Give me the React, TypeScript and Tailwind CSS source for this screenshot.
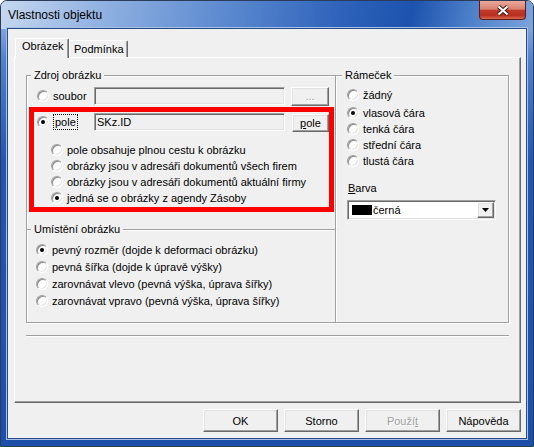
import React from "react";

// classic 3D edges
const raised =
  "border border-t-white border-l-white border-r-[#696969] border-b-[#696969] shadow-[inset_-1px_-1px_0_#a0a0a0,inset_1px_1px_0_#e3e3e3] bg-[#f0f0f0]";
const sunken =
  "border border-t-[#a0a0a0] border-l-[#a0a0a0] border-r-white border-b-white shadow-[inset_1px_1px_0_#696969,inset_-1px_-1px_0_#e3e3e3]";

function Radio({ checked = false }: { checked?: boolean }) {
  return (
    <span className="w-[12px] h-[12px] shrink-0 rounded-full bg-white border border-t-[#a0a0a0] border-l-[#a0a0a0] border-r-white border-b-white shadow-[inset_1px_1px_0_#8a8a8a,inset_-1px_-1px_0_#e3e3e3] flex items-center justify-center">
      {checked && <span className="w-[4px] h-[4px] rounded-full bg-black" />}
    </span>
  );
}

function Option({ label, checked, h = "h-[16px]" }: { label: string; checked?: boolean; h?: string }) {
  return (
    <div className={`flex items-center gap-[4px] ${h}`}>
      <Radio checked={checked} />
      <span className="whitespace-nowrap">{label}</span>
    </div>
  );
}

function Legend({ children, className = "" }: { children: React.ReactNode; className?: string }) {
  return (
    <span className={`absolute -top-[8px] bg-[#f0f0f0] px-[3px] leading-[14px] whitespace-nowrap ${className}`}>
      {children}
    </span>
  );
}

function DlgButton({ children, disabled }: { children: React.ReactNode; disabled?: boolean }) {
  return (
    <div
      className={`w-[75px] h-[23px] flex items-center justify-center ${raised} ${
        disabled ? "text-[#a0a0a0] [text-shadow:1px_1px_0_#fff]" : ""
      }`}
    >
      {children}
    </div>
  );
}

export default function App() {
  return (
    <div className="w-[534px] h-[447px] bg-white overflow-hidden font-['Liberation_Sans',Arial,sans-serif] text-[11px] leading-[14px] text-black">
      <div className="h-full flex flex-col rounded-t-[7px] border border-[#2c3b57] bg-[linear-gradient(180deg,#a8c2ea_0px,#4f80cc_60px,#2257b1_160px,#1b4fa9_100%)] overflow-hidden">
        {/* title bar */}
        <div className="h-[28px] shrink-0 flex items-start justify-between bg-[linear-gradient(100deg,#c6d8ef_0%,#93b3e2_18%,#5c8ad0_42%,#2e62ba_64%,#1d53ae_77%,#4d80ca_88%,#7ca4db_100%)]">
          <span className="mt-[6px] ml-[7px] text-[12px] leading-[16px]">Vlastnosti objektu</span>
          <div className="mr-[7px] w-[47px] h-[19px] rounded-b-[4px] border border-t-0 border-[#5a1d1d] bg-[linear-gradient(180deg,#eaa99c_0%,#d9826f_45%,#c0392b_52%,#b8301f_80%,#d86a4e_100%)] flex items-center justify-center">
            <svg width="14" height="11" viewBox="0 0 14 11">
              <path d="M2.5 1.5 L11.5 9.5 M11.5 1.5 L2.5 9.5" stroke="#3b1616" strokeWidth="4" />
              <path d="M2.5 1.5 L11.5 9.5 M11.5 1.5 L2.5 9.5" stroke="#fff" strokeWidth="2.2" />
            </svg>
          </div>
        </div>

        {/* client area */}
        <div className="flex-1 mx-[7px] mb-[8px] bg-[#f0f0f0] shadow-[0_0_0_1px_#274c8a,0_0_0_2px_#a6c0e6] pt-[9px] pl-[6px]">
          {/* tabs */}
          <div className="relative z-10 flex items-end h-[20px] -mb-[1px] ml-[1px]">
            <div className="w-[54px] h-[20px] pl-[6px] bg-[#f0f0f0] rounded-t-[2px] border-t border-l border-white border-r border-r-[#696969] shadow-[inset_-1px_0_0_#a0a0a0]">
              Obrázek
            </div>
            <div className="w-[59px] h-[17px] mb-[1px] pl-[4px] pt-[1px] bg-[#f0f0f0] rounded-t-[2px] border-t border-l border-white border-r border-r-[#696969] shadow-[inset_-1px_0_0_#a0a0a0]">
              Podmínka
            </div>
          </div>

          {/* tab panel */}
          <div className="w-[507px] h-[346px] border border-t-white border-l-white border-r-[#696969] border-b-[#696969] shadow-[inset_-1px_-1px_0_#a0a0a0] pl-[11px] pt-[17px]">
            <div className="flex">
              <div className="w-[310px]">
                {/* Zdroj obrázku */}
                <div className="relative h-[154px] border-t border-l border-r border-[#a0a0a0] shadow-[inset_1px_1px_0_#fff,1px_0_0_#fff] pl-[10px] pt-[11px]">
                  <Legend className="left-[4px]">Zdroj obrázku</Legend>
                  <div className="flex items-center h-[18px]">
                    <div className="w-[57px] flex items-center gap-[4px]">
                      <Radio />
                      <span>soubor</span>
                    </div>
                    <div className={`w-[191px] h-[18px] bg-[#f0f0f0] ${sunken}`} />
                    <div className={`ml-[6px] w-[38px] h-[19px] flex items-center justify-center text-[#a0a0a0] [text-shadow:1px_1px_0_#fff] ${raised}`}>
                      ...
                    </div>
                  </div>

                  <div className="mt-[2px] -ml-[8px] w-[305px] h-[105px] border-[5px] border-[#ff0000]">
                    <div className="mt-[1px] flex items-start">
                      <div className="w-[60px] h-[18px] pl-[3px] flex items-center gap-[4px]">
                        <Radio checked />
                        <span className="h-[16px] px-[1px] border border-dotted border-black leading-[14px]">pole</span>
                      </div>
                      <div className={`w-[191px] h-[18px] pl-[2px] leading-[16px] bg-[#f0f0f0] ${sunken}`}>SKz.ID</div>
                      <div className={`ml-[7px] mt-[1px] w-[37px] h-[18px] flex items-center justify-center ${raised}`}>
                        <span>
                          <u>p</u>ole
                        </span>
                      </div>
                    </div>
                    <div className="mt-[10px] pl-[17px]">
                      <Option label="pole obsahuje plnou cestu k obrázku" />
                      <Option label="obrázky jsou v adresáři dokumentů všech firem" />
                      <Option label="obrázky jsou v adresáři dokumentů aktuální firmy" />
                      <Option label="jedná se o obrázky z agendy Zásoby" checked />
                    </div>
                  </div>
                </div>

                {/* Umístění obrázku */}
                <div className="relative h-[94px] border border-[#a0a0a0] shadow-[inset_1px_1px_0_#fff,1px_1px_0_#fff] pl-[9px] pt-[11px]">
                  <Legend className="left-[4px]">Umístění obrázku</Legend>
                  <Option h="h-[17px]" label="pevný rozměr (dojde k deformaci obrázku)" checked />
                  <Option h="h-[17px]" label="pevná šířka (dojde k úpravě výšky)" />
                  <Option h="h-[17px]" label="zarovnávat vlevo (pevná výška, úprava šířky)" />
                  <Option h="h-[17px]" label="zarovnávat vpravo (pevná výška, úprava šířky)" />
                </div>
              </div>

              {/* Rámeček */}
              <div className="relative w-[173px] h-[248px] border-t border-r border-b border-[#a0a0a0] shadow-[inset_0_1px_0_#fff,1px_1px_0_#fff] pl-[11px] pt-[11px]">
                <Legend className="left-[6px]">Rámeček</Legend>
                <Option label="žádný" />
                <div className="mt-[2px]">
                  <Option label="vlasová čára" checked />
                  <Option label="tenká čára" />
                  <Option label="střední čára" />
                  <Option label="tlustá čára" />
                </div>
                <div className="mt-[12px] h-[14px] pl-[1px]">
                  <u>B</u>arva
                </div>
                <div className={`mt-[5px] w-[149px] h-[20px] bg-white flex items-center ${sunken}`}>
                  <span className="ml-[4px] w-[20px] h-[10px] bg-black" />
                  <span className="ml-[1px]">černá</span>
                  <div className={`ml-auto mr-[1px] w-[17px] h-[16px] flex items-center justify-center ${raised}`}>
                    <svg width="7" height="4" viewBox="0 0 7 4">
                      <polygon points="0,0 7,0 3.5,4" fill="#000" />
                    </svg>
                  </div>
                </div>
              </div>
            </div>

            <div className="mt-[12px] w-[483px] h-[2px] border-t border-t-[#a0a0a0] border-b border-b-white" />
          </div>

          {/* buttons */}
          <div className="mt-[6px] w-[507px] flex justify-end gap-[6px]">
            <DlgButton>OK</DlgButton>
            <DlgButton>Storno</DlgButton>
            <DlgButton disabled>
              <span>
                Použí<u>t</u>
              </span>
            </DlgButton>
            <DlgButton>Nápověda</DlgButton>
          </div>
        </div>
      </div>
    </div>
  );
}
